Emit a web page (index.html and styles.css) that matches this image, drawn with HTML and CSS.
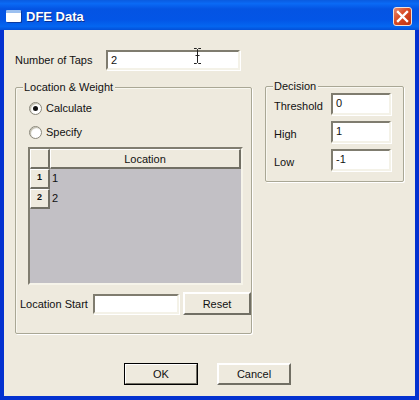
FILE: index.html
```html
<!DOCTYPE html>
<html lang="en">
<head>
    <meta charset="UTF-8">
    <title>DFE Data</title>
    <link rel="stylesheet" href="styles.css">
</head>
<body>
    <div class="window">
        <div class="titlebar">
            <span class="app-icon"></span>
            <span class="title">DFE Data</span>
            <span class="close">
                <svg width="13" height="13" viewBox="0 0 13 13"><path d="M2 2L11 11M11 2L2 11" stroke="#fff" stroke-width="2.4" stroke-linecap="square" fill="none"/></svg>
            </span>
        </div>
        <div class="content">
            <div class="taps">
                <label class="taps-label">Number of Taps</label>
                <div class="input taps-input">2</div>
                <svg class="ibeam" width="9" height="16" viewBox="0 0 9 16"><path d="M1 .5H3.5L4.5 1.5L5.500 .5H8M4.500 1.500V14.500M1 15.500H3.500L4.500 14.500L5.500 15.500H8M2.500 7.500H6.500" stroke="#222" fill="none"/></svg>
            </div>
            <div class="panels">
                <div class="group location">
                    <span class="legend">Location &amp; Weight</span>
                    <div class="radio-row"><span class="radio checked"></span>Calculate</div>
                    <div class="radio-row"><span class="radio"></span>Specify</div>
                    <div class="grid">
                        <div class="cell corner"></div>
                        <div class="cell head">Location</div>
                        <div class="cell rowhead">1</div>
                        <div class="value">1</div>
                        <div class="cell rowhead">2</div>
                        <div class="value">2</div>
                    </div>
                    <div class="start">
                        <label class="start-label">Location Start</label>
                        <div class="input start-input"></div>
                        <button class="btn reset">Reset</button>
                    </div>
                </div>
                <div class="group decision">
                    <span class="legend">Decision</span>
                    <div class="field"><label>Threshold</label><div class="input small-input">0</div></div>
                    <div class="field"><label>High</label><div class="input small-input">1</div></div>
                    <div class="field"><label>Low</label><div class="input small-input">-1</div></div>
                </div>
            </div>
            <div class="actions">
                <button class="btn default">OK</button>
                <button class="btn">Cancel</button>
            </div>
        </div>
    </div>
</body>
</html>
```

FILE: styles.css
```css
*{
    box-sizing: border-box;
}
body{
    margin: 0;
    font-family: "Liberation Sans", sans-serif;
    font-size: 11px;
    color: #111;
}
.window{
    width: 419px;
    height: 400px;
    display: flex;
    flex-direction: column;
    background: #0331d0;
    overflow: hidden;
}

/* title bar */
.titlebar{
    height: 30px;
    flex: none;
    display: flex;
    align-items: center;
    padding: 2px 7px 0 6px;
    background: linear-gradient(#0a5be0 0%, #0a6af5 12%, #0454e3 30%, #0355e6 65%, #0466f0 88%, #0350d8 100%);
}
.app-icon{
    width: 15px;
    height: 12px;
    background: #fff;
    border-top: 3px solid #9cc0f0;
    border-radius: 1px;
    box-shadow: 1px 1px 0 #0a3aa0;
}
.title{
    margin: 1px 0 0 5px;
    font-size: 13px;
    font-weight: 700;
    color: #fff;
    text-shadow: 1px 1px 0 #0a2f90;
}
.close{
    margin-left: auto;
    width: 19px;
    height: 19px;
    display: flex;
    align-items: center;
    justify-content: center;
    border: 1px solid #f0e0d8;
    border-radius: 3px;
    background: linear-gradient(135deg, #e88a70, #d84a24 45%, #bd3010);
}

/* main area */
.content{
    flex: 1;
    margin: 0 4px 4px;
    padding: 20px 0 0 11px;
    background: #eeeade;
    display: flex;
    flex-direction: column;
}
.taps{
    display: flex;
    align-items: center;
    position: relative;
}
.taps-label{
    width: 91px;
}
.ibeam{
    position: absolute;
    left: 178px;
    top: -2px;
}
.input{
    height: 20px;
    padding: 1px 0 0 3px;
    background: #fff;
    border: 2px solid;
    border-color: #7f7c6f #f4f2e8 #f4f2e8 #7f7c6f;
    box-shadow: 1px 1px 0 #fff;
    line-height: 15px;
}
.taps-input{
    width: 134px;
}

.panels{
    display: flex;
    align-items: flex-start;
    gap: 13px;
    margin-top: 17px;
}
.group{
    position: relative;
    border: 1px solid #a9a795;
    box-shadow: inset 1px 1px 0 #f8f7f0, 1px 1px 0 #fff;
    border-radius: 2px;
}
.legend{
    position: absolute;
    top: -7px;
    left: 7px;
    padding: 0 2px 0 1px;
    line-height: 13px;
    background: #eeeade;
}
.location{
    width: 237px;
    height: 247px;
    padding: 8px 0 0 12px;
}
.decision{
    width: 139px;
    height: 96px;
    margin-top: -1px;
    padding: 3px 0 0 8px;
}

.radio-row{
    height: 24px;
    display: flex;
    align-items: center;
    gap: 4px;
    padding-left: 1px;
}
.radio{
    width: 13px;
    height: 13px;
    border-radius: 50%;
    border: 1px solid #8a877a;
    background: #fff;
    box-shadow: inset 1px 1px 1px #bdbaa8;
    display: flex;
    align-items: center;
    justify-content: center;
}
.checked::after{
    content: '';
    width: 5px;
    height: 5px;
    border-radius: 50%;
    background: #111;
}

/* location table */
.grid{
    width: 215px;
    height: 138px;
    margin-top: 3px;
    display: grid;
    grid-template-columns: 20px 1fr;
    grid-template-rows: 20px 20px 20px;
    align-content: start;
    background: #c2c0c5;
    border: 2px solid;
    border-color: #807d70 #f6f4ea #f6f4ea #807d70;
}
.cell{
    background: #eeeade;
    border: 1px solid;
    border-color: #fff #716f64 #716f64 #fff;
    border-width: 1px 2px 2px 1px;
    display: flex;
    align-items: center;
    justify-content: center;
}
.rowhead{
    font-size: 9px;
    font-weight: 700;
    padding-bottom: 3px;
}
.value{
    padding: 3px 0 0 2px;
}

.start{
    display: flex;
    align-items: center;
    gap: 4px;
    margin-top: 7px;
    margin-left: -8px;
}
.start-label{
    width: 69px;
    white-space: nowrap;
}
.start-input{
    width: 86px;
}
.reset{
    width: 68px;
    height: 23px;
}

.btn{
    font: inherit;
    color: #111;
    background: #eeeade;
    border: 2px solid;
    border-color: #fff #716f64 #716f64 #fff;
    padding: 0;
}
.field{
    display: flex;
    align-items: center;
    height: 28px;
}
.field label{
    width: 57px;
    padding-top: 3px;
}
.small-input{
    width: 60px;
    height: 22px;
}

.actions{
    display: flex;
    gap: 19px;
    margin-top: 29px;
    margin-left: 109px;
}
.actions .btn{
    width: 74px;
    height: 22px;
}
.default{
    outline: 1px solid #000;
    outline-offset: -1px;
}
```
